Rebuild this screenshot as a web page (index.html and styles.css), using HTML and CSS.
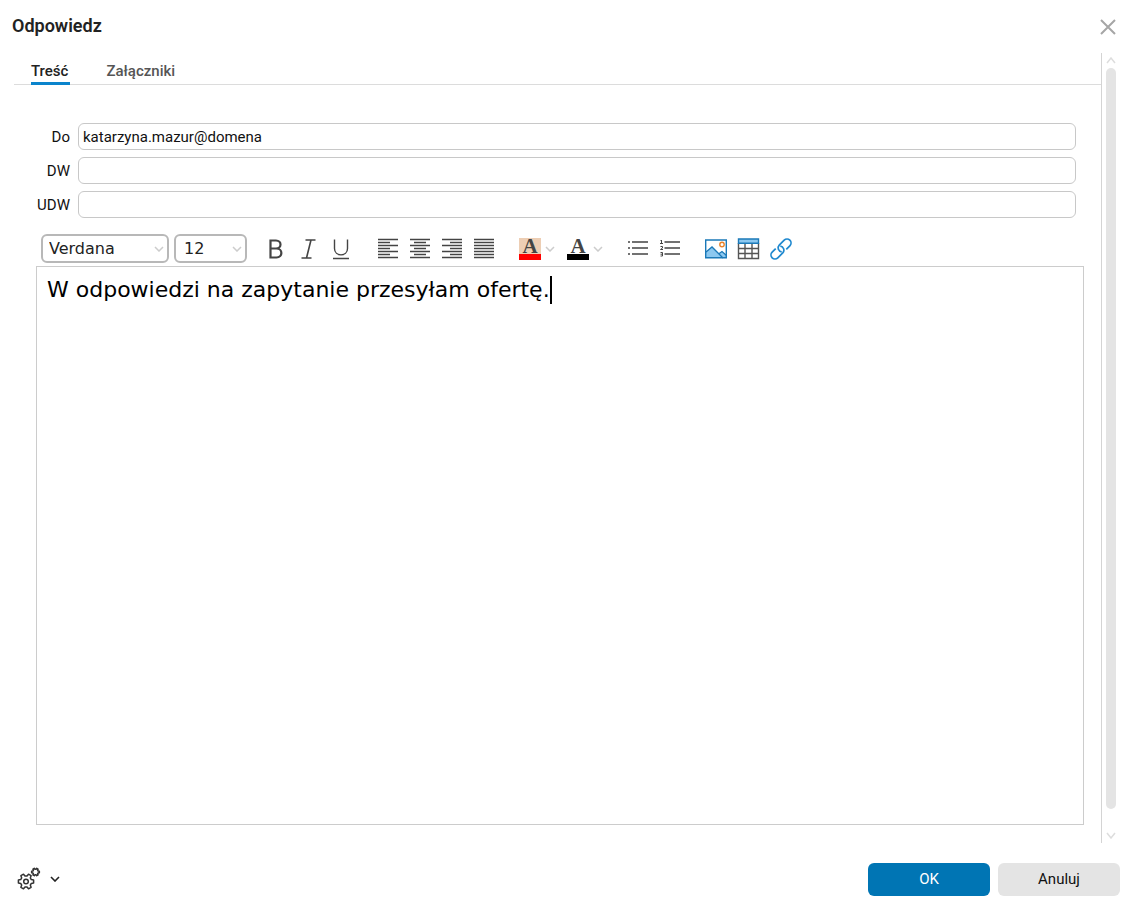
FILE: index.html
```html
<!DOCTYPE html>
<html lang="pl">
<head>
    <meta charset="UTF-8">
    <meta name="viewport" content="width=device-width, initial-scale=1.0">
    <title>Odpowiedz</title>
    <link rel="stylesheet" href="styles.css">
</head>
<body>
    <form class="dialog">
        <header class="dialog-header">
            <h1>Odpowiedz</h1>
            <button type="button" class="close-btn" aria-label="Zamknij">
                <svg width="18" height="18" viewBox="0 0 18 18"><path d="M2 2l14 14M16 2L2 16" fill="none" stroke="#a6a6a6" stroke-width="2"/></svg>
            </button>
        </header>

        <div class="dialog-body">
            <main class="content">
                <nav class="tabs">
                    <a href="#tresc" class="tab active">Treść</a>
                    <a href="#zalaczniki" class="tab">Załączniki</a>
                </nav>

                <div class="fields">
                    <label for="to">Do</label>
                    <input type="text" id="to" value="katarzyna.mazur@domena">
                    <label for="cc">DW</label>
                    <input type="text" id="cc">
                    <label for="bcc">UDW</label>
                    <input type="text" id="bcc">
                </div>

                <div class="toolbar">
                    <div class="select-box font-box">
                        <select aria-label="Czcionka"><option>Verdana</option></select>
                        <svg class="arrow" width="10" height="6" viewBox="0 0 10 6"><path d="M1 1l4 4 4-4"/></svg>
                    </div>
                    <div class="select-box size-box">
                        <select aria-label="Rozmiar"><option>12</option></select>
                        <svg class="arrow" width="10" height="6" viewBox="0 0 10 6"><path d="M1 1l4 4 4-4"/></svg>
                    </div>

                    <div class="group">
                        <button type="button" class="tool" aria-label="Pogrubienie">
                            <svg class="icon" viewBox="0 0 24 24"><path d="M6.500 2.500v19M6.500 3.500h5.500c6 0 6 8 0 8H6.500M6.500 11.500h6c6.500 0 6.500 9 0 9h-6" stroke-width="2.200"/></svg>
                        </button>
                        <button type="button" class="tool" aria-label="Kursywa">
                            <svg class="icon" viewBox="0 0 24 24"><path d="M9.500 3h10M5.500 21h10M15 3l-4.500 18" stroke-width="1.600"/></svg>
                        </button>
                        <button type="button" class="tool" aria-label="Podkreślenie">
                            <svg class="icon" viewBox="0 0 24 24"><path d="M6.500 2.500v9c0 8.500 13 8.500 13 0v-9M5 21.500h16" stroke-width="1.400"/></svg>
                        </button>
                    </div>

                    <div class="group">
                        <button type="button" class="tool" aria-label="Do lewej">
                            <svg class="icon" viewBox="0 0 24 24"><path d="M2 2.500h20M2 5.500h12M2 8.500h20M2 11.500h12M2 14.500h20M2 17.500h12M2 20.500h20" stroke-width="1.500"/></svg>
                        </button>
                        <button type="button" class="tool" aria-label="Do środka">
                            <svg class="icon" viewBox="0 0 24 24"><path d="M2 2.500h20M6 5.500h12M2 8.500h20M6 11.500h12M2 14.500h20M6 17.500h12M2 20.500h20" stroke-width="1.500"/></svg>
                        </button>
                        <button type="button" class="tool" aria-label="Do prawej">
                            <svg class="icon" viewBox="0 0 24 24"><path d="M2 2.500h20M10 5.500h12M2 8.500h20M10 11.500h12M2 14.500h20M10 17.500h12M2 20.500h20" stroke-width="1.500"/></svg>
                        </button>
                        <button type="button" class="tool" aria-label="Wyjustuj">
                            <svg class="icon" viewBox="0 0 24 24"><path d="M2 2.500h20M2 5.500h20M2 8.500h20M2 11.500h20M2 14.500h20M2 17.500h20M2 20.500h20" stroke-width="1.500"/></svg>
                        </button>
                    </div>

                    <div class="group colors">
                        <div class="split">
                            <button type="button" class="color-btn highlight"><span>A</span></button>
                            <button type="button" class="drop" aria-label="Kolor tła">
                                <svg class="arrow" width="10" height="6" viewBox="0 0 10 6"><path d="M1 1l4 4 4-4"/></svg>
                            </button>
                        </div>
                        <div class="split">
                            <button type="button" class="color-btn"><span>A</span></button>
                            <button type="button" class="drop" aria-label="Kolor tekstu">
                                <svg class="arrow" width="10" height="6" viewBox="0 0 10 6"><path d="M1 1l4 4 4-4"/></svg>
                            </button>
                        </div>
                    </div>

                    <div class="group">
                        <button type="button" class="tool" aria-label="Lista punktowana">
                            <svg class="icon" viewBox="0 0 24 24"><path d="M4 5h2M4 11h2M4 17h2M8 5h16M8 11h16M8 17h16" stroke-width="1.400"/></svg>
                        </button>
                        <button type="button" class="tool" aria-label="Lista numerowana">
                            <svg class="icon" viewBox="0 0 24 24"><path d="M8.500 5H24M8.500 11H24M8.500 17H24" stroke-width="1.400"/><path d="M4.500 4l1-1v3.500M4 6.500h3M4.500 9.500h2v1.500l-2 1.500H7M4.500 15.500h2v3.500h-2M4.500 17.200h2" stroke-width="1"/></svg>
                        </button>
                    </div>

                    <div class="group">
                        <button type="button" class="tool" aria-label="Obraz">
                            <svg class="icon" viewBox="0 0 24 24"><path d="M2 15l6-5 7 6.500 3-2 4.500 4v2.500H2z" fill="#8cc8f0" stroke="none"/><path d="M2 15l6-5 11 11M14.500 17l3.500-2.500 4.500 4" stroke="#1b79b8" stroke-width="1.300"/><circle cx="18" cy="7.500" r="2.200" stroke="#e8832a" stroke-width="1.400"/><path d="M1.700 3h20.600v17.800H1.700z" stroke="#1b79b8" stroke-width="1.400"/></svg>
                        </button>
                        <button type="button" class="tool" aria-label="Tabela">
                            <svg class="icon" viewBox="0 0 24 24"><path d="M2.500 6v15.500h20V6M2.500 11.500h20M2.500 16.500h20M9 6v15M16 6v15" stroke="#555" stroke-width="1.400"/><path d="M2.500 2h20v4.300h-20z" fill="#8cc8f0" stroke="#1b79b8" stroke-width="1.400"/></svg>
                        </button>
                        <button type="button" class="tool" aria-label="Odnośnik">
                            <svg class="icon" viewBox="0 0 24 24"><g transform="translate(13 12) rotate(-45)" stroke="#1e88cf" stroke-width="1.700"><path id="chain" d="M-3.500-4H-8.500a4 4 0 0 0 0 8H-1.500a4 4 0 0 0 3-6.500"/><use href="#chain" transform="rotate(180)"/></g></svg>
                        </button>
                    </div>
                </div>

                <div class="editor">
                    <textarea aria-label="Treść wiadomości" spellcheck="false">W odpowiedzi na zapytanie przesyłam ofertę.</textarea>
                    <span class="caret"></span>
                </div>
            </main>

            <div class="scrollbar">
                <svg class="arrow" width="10" height="7" viewBox="0 0 10 7"><path d="M1 6l4-5 4 5"/></svg>
                <div class="thumb"></div>
                <svg class="arrow" width="10" height="7" viewBox="0 0 10 7"><path d="M1 1l4 5 4-5"/></svg>
            </div>
        </div>

        <footer class="dialog-footer">
            <button type="button" class="settings-btn" aria-label="Ustawienia">
                <svg width="24" height="24" viewBox="0 0 24 24" fill="none" stroke="#333" stroke-linejoin="round">
                    <g transform="translate(9 14.500)" stroke-width="1.500">
                        <path id="gear" d="M5.300-1.900L7.600-1.500 7.600 1.500 5.300 1.900 4.300 3.600 5.100 5.800 2.500 7.300 1 5.500-1 5.500-2.500 7.300-5.100 5.800-4.300 3.600-5.300 1.900-7.600 1.500-7.600-1.500-5.300-1.900-4.300-3.600-5.100-5.800-2.500-7.300-1-5.500 1-5.500 2.500-7.300 5.100-5.800 4.300-3.600z"/>
                        <circle r="2.300"/>
                    </g>
                    <use href="#gear" transform="translate(18.500 5) scale(.5)" stroke-width="3.200"/>
                </svg>
                <svg width="10" height="6" viewBox="0 0 10 6"><path d="M1 1l4 4 4-4" fill="none" stroke="#222" stroke-width="1.600"/></svg>
            </button>
            <button type="submit" class="btn primary">OK</button>
            <button type="button" class="btn">Anuluj</button>
        </footer>
    </form>
</body>
</html>
```
FILE: styles.css
```css
* {
    box-sizing: border-box;
}

body {
    font-family: Roboto, Arial, sans-serif;
    font-size: 15px;
    color: #222;
    background-color: #fff;
    margin: 0;
}

button {
    display: flex;
    justify-content: center;
    align-items: center;
    padding: 0;
    border: none;
    background: none;
    font: inherit;
    cursor: pointer;
}

.dialog {
    display: flex;
    flex-direction: column;
    min-height: 100vh;
}

.dialog-header {
    display: flex;
    justify-content: space-between;
    align-items: center;
    height: 53px;
    padding: 0 12px;
}

h1 {
    margin: 0;
    padding-bottom: 2px;
    font-size: 18px;
    font-weight: 600;
    line-height: 24px;
}

.dialog-body {
    display: flex;
    flex: 1;
}

.content {
    display: flex;
    flex-direction: column;
    flex: 1;
    border-right: 1px solid #d4d4d4;
    padding-bottom: 18px;
}

.tabs {
    display: flex;
    gap: 36px;
    height: 32px;
    margin-left: 14px;
    padding-left: 17px;
    border-bottom: 1px solid #dcdcdc;
}

.tab {
    height: 32px;
    padding: 9px 1px 0 0;
    color: #555;
    font-weight: 500;
    line-height: 18px;
    text-decoration: none;
}

.tab.active {
    padding-right: 2px;
    color: #222;
    border-bottom: 3px solid #0a84cc;
}

.fields {
    display: grid;
    grid-template-columns: 34px 1fr;
    gap: 7px 8px;
    align-items: center;
    margin: 38px 25px 0 36px;
}

.fields label {
    color: #111;
    text-align: right;
}

.fields input {
    height: 27px;
    padding: 0 4px;
    border: 1px solid #c8c8c8;
    border-radius: 6px;
    color: #111;
    font: inherit;
}

.toolbar {
    display: flex;
    align-items: center;
    margin: 16px 17px 0 41px;
    padding-bottom: 3px;
}

.select-box {
    position: relative;
    margin-right: 5px;
}

.select-box select {
    appearance: none;
    width: 100%;
    height: 29px;
    padding: 0 6px;
    border: 2px solid #b8b8b8;
    border-radius: 6px;
    background-color: #fff;
    color: #222;
    font-family: Verdana, "DejaVu Sans", sans-serif;
    font-size: 16px;
}

.select-box .arrow {
    position: absolute;
    top: 12px;
    right: 5px;
    pointer-events: none;
}

.font-box {
    width: 128px;
}

.size-box {
    width: 73px;
    margin-right: 13px;
}

.size-box select {
    padding-left: 8px;
}

.arrow {
    fill: none;
    stroke: #ccc;
    stroke-width: 1.5;
}

.group {
    display: flex;
    margin-right: 16px;
}

.tool {
    width: 32px;
    height: 28px;
}

.icon {
    width: 24px;
    height: 24px;
    fill: none;
    stroke: #444;
}

.colors {
    gap: 8px;
}

.split {
    display: flex;
    align-items: center;
}

.color-btn {
    width: 28px;
}

.color-btn span {
    width: 22px;
    height: 22px;
    border-bottom: 6px solid #000;
    color: #444;
    font-family: "Liberation Serif", serif;
    font-size: 21px;
    font-weight: bold;
    line-height: 17px;
}

.color-btn.highlight span {
    background-color: #edceb4;
    border-color: #f00;
}

.drop {
    width: 12px;
}

.editor {
    position: relative;
    display: flex;
    flex: 1;
    margin: 0 17px 0 36px;
}

.editor textarea {
    flex: 1;
    padding: 8px 10px;
    border: 1px solid #ccc;
    outline: none;
    resize: none;
    color: #000;
    font-family: Verdana, "DejaVu Sans", sans-serif;
    font-size: 22px;
    line-height: 30px;
}

.caret {
    position: absolute;
    top: 10px;
    left: 514px;
    width: 2px;
    height: 28px;
    background-color: #000;
}

.scrollbar {
    display: flex;
    flex-direction: column;
    align-items: center;
    gap: 4px;
    width: 27px;
    padding: 4px 13px 4px 4px;
}

.scrollbar .arrow {
    stroke: #ddd;
}

.thumb {
    flex: 1;
    width: 10px;
    margin-bottom: 19px;
    border-radius: 5px;
    background-color: #e4e4e4;
}

.dialog-footer {
    display: flex;
    align-items: center;
    gap: 8px;
    height: 67px;
    padding: 5px 9px 0 17px;
}

.settings-btn {
    gap: 9px;
    margin-right: auto;
}

.btn {
    width: 122px;
    height: 33px;
    border-radius: 6px;
    background-color: #e4e4e4;
    color: #111;
}

.btn.primary {
    background-color: #0075b4;
    color: #fff;
}
```
